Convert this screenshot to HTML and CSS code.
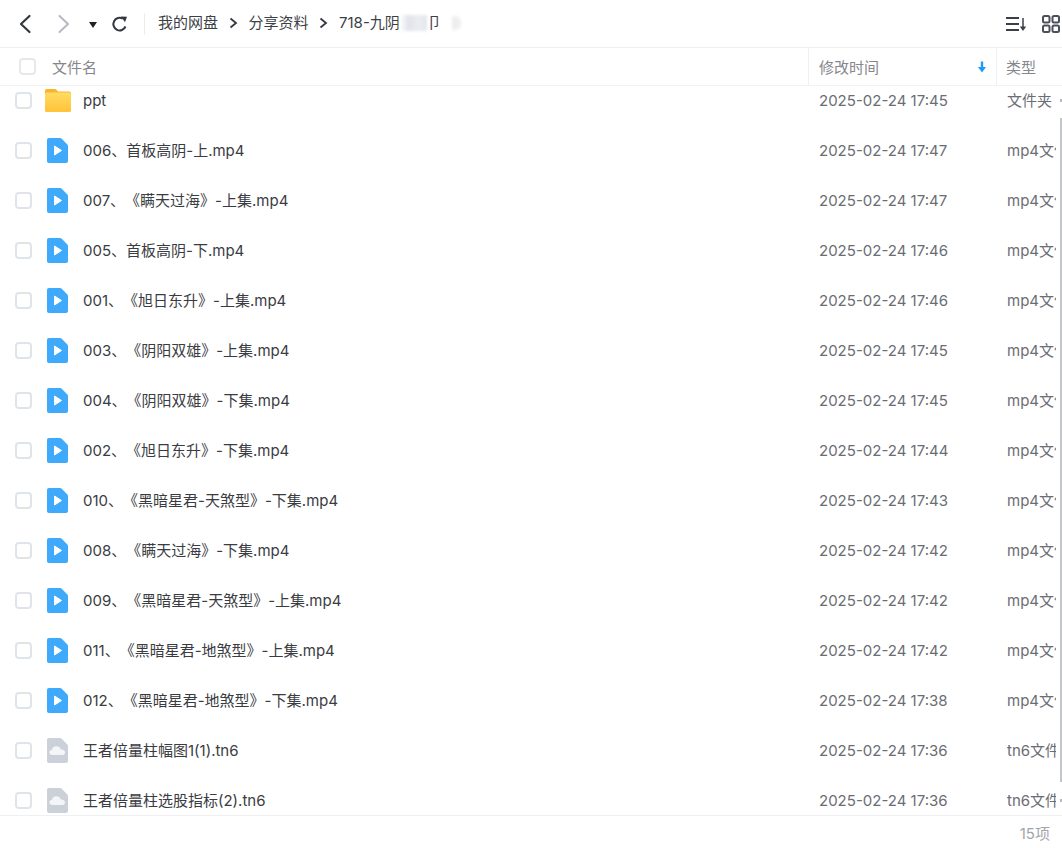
FILE: index.html
```
<!DOCTYPE html>
<html lang="zh">
<head>
<meta charset="utf-8">
<title>我的网盘</title>
<link rel="stylesheet" href="styles.css">
</head>
<body>
<svg class="defs" width="0" height="0">
<defs>
<linearGradient id="folder-fill" x1="0" y1="0" x2="0" y2="1"><stop offset="0" stop-color="#ffdc63"/><stop offset="1" stop-color="#ffc338"/></linearGradient>
<symbol id="folder" viewBox="0 0 26 23"><path d="M2 0h7.500c1 0 1.600.4 2.200 1L13 2.500h11c1.200 0 2 .8 2 2V21c0 1.200-.8 2-2 2H2c-1.200 0-2-.8-2-2V2C0 .8.8 0 2 0z" fill="#f9b62c"/><path d="M2 3.500h22c1.200 0 2 .8 2 2V21c0 1.200-.8 2-2 2H2c-1.200 0-2-.8-2-2V5.500c0-1.200.8-2 2-2z" fill="url(#folder-fill)"/></symbol>
<symbol id="video" viewBox="0 0 21 25"><path d="M2 0h11c.6 0 1.100.2 1.500.6L20.400 6.500c.4.4.6.9.6 1.500V23c0 1.200-.8 2-2 2H2c-1.200 0-2-.8-2-2V2C0 .8.8 0 2 0z" fill="#3fa9fb"/><path d="M7.500 8l7 4.500-7 4.500z" fill="#fff" stroke="#fff" stroke-width="1" stroke-linejoin="round"/></symbol>
<symbol id="cloud" viewBox="0 0 21 25"><path d="M2 0h11c.6 0 1.100.2 1.500.6L20.400 6.500c.4.4.6.9.6 1.500V23c0 1.200-.8 2-2 2H2c-1.200 0-2-.8-2-2V2C0 .8.8 0 2 0z" fill="#ccd1d9"/><path d="M5.500 17c-1.900 0-3.200-1-3.200-2.500 0-1.300 1-2.300 2.500-2.500.5-2.300 2.100-3.700 4.500-3.700 2.200 0 3.900 1.200 4.500 3.200 2.400-.2 4.200 1 4.200 2.900 0 1.500-1.200 2.600-3 2.600z" fill="#f4f5f7"/></symbol>
</defs>
</svg>
<div class="app">
  <header class="toolbar">
    <button class="nav-btn back" aria-label="后退"><svg width="14" height="20" viewBox="0 0 14 20"><path d="M11.500 2L3 10l8.500 8" class="ico-line dark"/></svg></button>
    <button class="nav-btn forward" aria-label="前进"><svg width="14" height="20" viewBox="0 0 14 20"><path d="M2.500 2L11 10l-8.500 8" class="ico-line light"/></svg></button>
    <span class="caret"></span>
    <button class="nav-btn refresh" aria-label="刷新"><svg width="18" height="18" viewBox="0 0 18 18"><path d="M14.500 11.500A6.300 6.300 0 1 1 11.800 3.600" class="ico-thin"/><path d="M10 1.500l6 .3-2 5.500z" fill="#33373e"/></svg></button>
    <span class="divider"></span>
    <nav class="crumbs">
      <span>我的网盘</span>
      <svg class="sep" width="9" height="12" viewBox="0 0 9 12"><path d="M1.500 1.500L7 6l-5.500 4.500" class="ico-sep"/></svg>
      <span>分享资料</span>
      <svg class="sep" width="9" height="12" viewBox="0 0 9 12"><path d="M1.500 1.500L7 6l-5.500 4.500" class="ico-sep"/></svg>
      <span class="last">718-九阴<span class="blur-a"></span>卩<span class="blur-b"></span></span>
    </nav>
    <div class="tools">
      <svg width="22" height="18" viewBox="0 0 22 18"><path d="M1 3h13M1 9h13M1 15h13" class="ico-bar"/><path d="M18 3v10" class="ico-arrow"/><path d="M14.800 11.500h6.400L18 16z" fill="#3a3f4a"/></svg>
      <svg width="18" height="18" viewBox="0 0 18 18"><g class="ico-grid"><rect x="1" y="1" width="6.500" height="6.500" rx="1.500"/><rect x="10.500" y="1" width="6.500" height="6.500" rx="1.500"/><rect x="1" y="10.500" width="6.500" height="6.500" rx="1.500"/><rect x="10.500" y="10.500" width="6.500" height="6.500" rx="1.500"/></g></svg>
    </div>
  </header>

  <div class="thead">
    <div class="th-name"><span class="check head-check"></span><span>文件名</span></div>
    <div class="th-time"><span>修改时间</span><svg width="10" height="12" viewBox="0 0 10 12"><path d="M5 0.500v6.500" class="ico-sort"/><path d="M1 6h8l-4 5.500z" fill="#1f9bf5"/></svg></div>
    <div class="th-type">类型</div>
  </div>

  <main class="list">
    <div class="rows">
      <div class="row"><span class="check"></span><svg class="ico folder"><use href="#folder"/></svg><span class="name">ppt</span><span class="time">2025-02-24 17:45</span><span class="type">文件夹</span></div>
      <div class="row"><span class="check"></span><svg class="ico file"><use href="#video"/></svg><span class="name">006、首板高阴-上.mp4</span><span class="time">2025-02-24 17:47</span><span class="type">mp4文件</span></div>
      <div class="row"><span class="check"></span><svg class="ico file"><use href="#video"/></svg><span class="name">007、《瞒天过海》-上集.mp4</span><span class="time">2025-02-24 17:47</span><span class="type">mp4文件</span></div>
      <div class="row"><span class="check"></span><svg class="ico file"><use href="#video"/></svg><span class="name">005、首板高阴-下.mp4</span><span class="time">2025-02-24 17:46</span><span class="type">mp4文件</span></div>
      <div class="row"><span class="check"></span><svg class="ico file"><use href="#video"/></svg><span class="name">001、《旭日东升》-上集.mp4</span><span class="time">2025-02-24 17:46</span><span class="type">mp4文件</span></div>
      <div class="row"><span class="check"></span><svg class="ico file"><use href="#video"/></svg><span class="name">003、《阴阳双雄》-上集.mp4</span><span class="time">2025-02-24 17:45</span><span class="type">mp4文件</span></div>
      <div class="row"><span class="check"></span><svg class="ico file"><use href="#video"/></svg><span class="name">004、《阴阳双雄》-下集.mp4</span><span class="time">2025-02-24 17:45</span><span class="type">mp4文件</span></div>
      <div class="row"><span class="check"></span><svg class="ico file"><use href="#video"/></svg><span class="name">002、《旭日东升》-下集.mp4</span><span class="time">2025-02-24 17:44</span><span class="type">mp4文件</span></div>
      <div class="row"><span class="check"></span><svg class="ico file"><use href="#video"/></svg><span class="name">010、《黑暗星君-天煞型》-下集.mp4</span><span class="time">2025-02-24 17:43</span><span class="type">mp4文件</span></div>
      <div class="row"><span class="check"></span><svg class="ico file"><use href="#video"/></svg><span class="name">008、《瞒天过海》-下集.mp4</span><span class="time">2025-02-24 17:42</span><span class="type">mp4文件</span></div>
      <div class="row"><span class="check"></span><svg class="ico file"><use href="#video"/></svg><span class="name">009、《黑暗星君-天煞型》-上集.mp4</span><span class="time">2025-02-24 17:42</span><span class="type">mp4文件</span></div>
      <div class="row"><span class="check"></span><svg class="ico file"><use href="#video"/></svg><span class="name">011、《黑暗星君-地煞型》-上集.mp4</span><span class="time">2025-02-24 17:42</span><span class="type">mp4文件</span></div>
      <div class="row"><span class="check"></span><svg class="ico file"><use href="#video"/></svg><span class="name">012、《黑暗星君-地煞型》-下集.mp4</span><span class="time">2025-02-24 17:38</span><span class="type">mp4文件</span></div>
      <div class="row"><span class="check"></span><svg class="ico file"><use href="#cloud"/></svg><span class="name">王者倍量柱幅图1(1).tn6</span><span class="time">2025-02-24 17:36</span><span class="type">tn6文件</span></div>
      <div class="row"><span class="check"></span><svg class="ico file"><use href="#cloud"/></svg><span class="name">王者倍量柱选股指标(2).tn6</span><span class="time">2025-02-24 17:36</span><span class="type">tn6文件</span></div>
    </div>
    <span class="scroll-dot dot-up"></span>
    <div class="scrollbar"></div>
    <span class="scroll-dot dot-down"></span>
  </main>

  <footer class="status">15项</footer>
</div>
</body>
</html>
```
FILE: styles.css
```
* { box-sizing: border-box; }
html, body { margin: 0; height: 100%; background: #fff; }
body { font-family: Inter, "Noto Sans CJK SC", sans-serif; color: #333; overflow: hidden; text-spacing-trim: space-all; }
.defs { position: absolute; }
.app { display: flex; flex-direction: column; height: 848px; width: 1062px; overflow: hidden; }

.toolbar { height: 48px; flex: none; display: flex; align-items: center; border-bottom: 1px solid #f0f0f2; padding-left: 18px; }
.nav-btn { border: 0; background: none; padding: 0; display: flex; align-items: center; justify-content: center; }
.back { width: 14px; height: 20px; }
.forward { width: 14px; height: 20px; margin-left: 25px; }
.caret { width: 0; height: 0; margin-left: 18px; border-left: 4px solid transparent; border-right: 4px solid transparent; border-top: 6px solid #222; margin-top: 2px; }
.refresh { width: 18px; height: 18px; margin-left: 14px; }
.divider { width: 1px; height: 22px; background: #ececee; margin-left: 15px; }
.ico-line { fill: none; stroke-width: 2.200; stroke-linecap: round; stroke-linejoin: round; }
.dark { stroke: #33373e; }
.light { stroke: #b9bcc2; }
.ico-thin { fill: none; stroke: #33373e; stroke-width: 2; }
.ico-sep { fill: none; stroke: #33373e; stroke-width: 1.800; }
.ico-bar { fill: none; stroke: #3a3f4a; stroke-width: 2; }
.ico-arrow { fill: none; stroke: #3a3f4a; stroke-width: 1.500; }
.ico-grid rect { fill: none; stroke: #4a4f5a; stroke-width: 2; }
.ico-sort { fill: none; stroke: #1f9bf5; stroke-width: 2.400; }

.crumbs { display: flex; align-items: center; margin-left: 13px; margin-bottom: 2px; font-size: 15px; line-height: 20px; color: #3c3f45; }
.sep { margin: 0 11px 0 10.500px; }
.last { display: flex; align-items: center; }
.blur-a { width: 27px; height: 16px; background: linear-gradient(90deg, #fff, #e0e4ea 30%, #eaedf1 70%, #e2e6eb); filter: blur(1.500px); }
.blur-b { width: 9px; height: 14px; margin-left: 10px; background: #eeeeee; border-radius: 2px 6px 6px 2px; filter: blur(1.500px); }

.tools { margin-left: auto; display: flex; align-items: center; gap: 15px; margin-right: 2px; }

.thead { height: 38px; flex: none; display: flex; align-items: stretch; border-bottom: 1px solid #f2f2f4; font-size: 15px; color: #85878c; }
.th-name { width: 808px; display: flex; align-items: center; }
.head-check { margin-left: 19px; margin-right: 16px; }
.th-name .check { border-color: #e6e8ec; }
.th-time { width: 189px; display: flex; align-items: center; justify-content: space-between; padding: 0 9px 0 10px; border-left: 1px solid #f0f0f2; border-right: 1px solid #f0f0f2; }
.th-type { padding-left: 9px; display: flex; align-items: center; }

.check { width: 17px; height: 17px; flex: none; border: 2px solid #dfe4ea; border-radius: 4px; background: #fff; }

.list { flex: 1; min-height: 0; position: relative; overflow: hidden; }
.rows { margin-top: -11px; }
.row { height: 50px; display: grid; grid-template-columns: 45px 38px 736px 188px 49px; align-items: center; font-size: 15px; line-height: 20px; color: #3a3c42; }
.row .check { margin-left: 15px; }
.ico { flex: none; }
.folder { width: 26px; height: 23px; }
.file { width: 21px; height: 25px; margin-left: 2px; }
.name { white-space: nowrap; margin-top: 2px; }
.time { color: #6a6d73; margin-top: 2px; }
.type { white-space: nowrap; overflow: hidden; color: #6a6d73; margin-top: 2px; }
.scrollbar { position: absolute; top: 32px; right: 0; width: 2px; height: 664px; background: #c4c6ca; }
.scroll-dot { position: absolute; right: 0; width: 2px; height: 3px; background: #b8babf; }
.dot-up { top: 13px; }
.dot-down { top: 713px; }

.status { height: 33px; flex: none; border-top: 1px solid #f0f0f2; display: flex; align-items: center; justify-content: flex-end; padding-right: 12px; font-size: 15px; color: #a3a5aa; }
```
